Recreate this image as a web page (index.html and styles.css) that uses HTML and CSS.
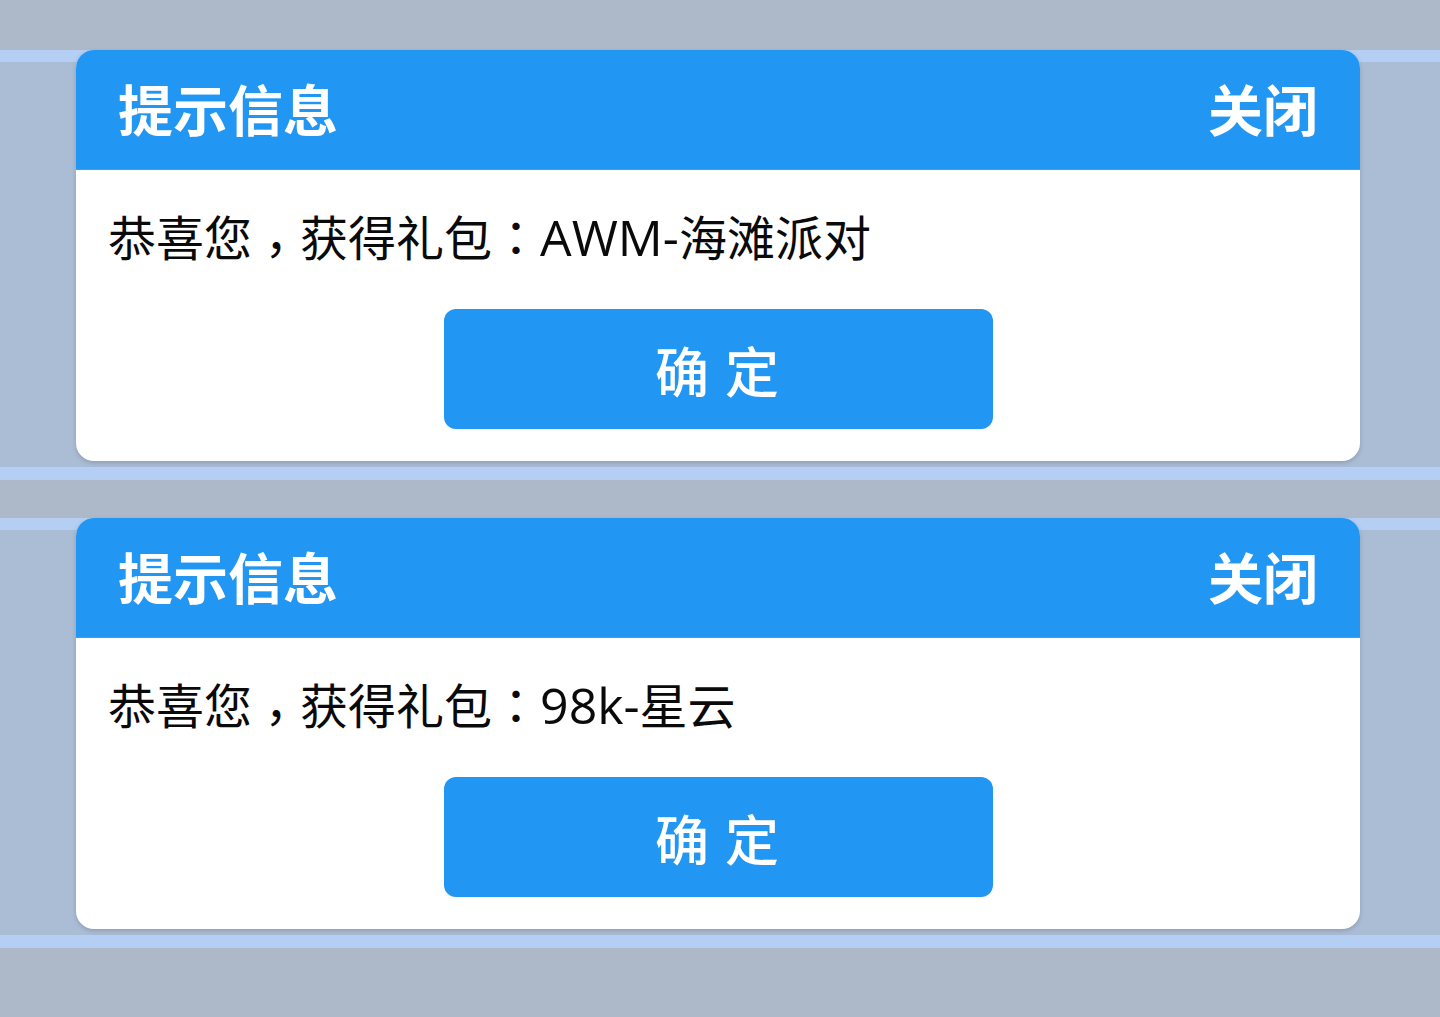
FILE: index.html
```html
<!DOCTYPE html>
<html lang="zh-CN">
<head>
<meta charset="utf-8">
<title>提示信息</title>
<link rel="stylesheet" href="styles.css">
</head>
<body>
<div class="page">
  <section class="overlay">
    <div class="dialog">
      <div class="dialog-head">
        <span class="dialog-title">提示信息</span>
        <span class="dialog-close">关闭</span>
      </div>
      <div class="dialog-body">
        <p class="dialog-msg">恭喜您<span class="punct comma" lang="zh-TW">，</span>获得礼包<span class="punct" lang="zh-TW">：</span><span class="code">AWM-</span>海滩派对</p>
        <button class="dialog-btn">确 定</button>
      </div>
    </div>
  </section>
  <section class="overlay">
    <div class="dialog">
      <div class="dialog-head">
        <span class="dialog-title">提示信息</span>
        <span class="dialog-close">关闭</span>
      </div>
      <div class="dialog-body">
        <p class="dialog-msg">恭喜您<span class="punct comma" lang="zh-TW">，</span>获得礼包<span class="punct" lang="zh-TW">：</span><span class="code">98k-</span>星云</p>
        <button class="dialog-btn">确 定</button>
      </div>
    </div>
  </section>
</div>
</body>
</html>
```

FILE: styles.css
```css
html, body {
  margin: 0;
  padding: 0;
}

body {
  background: #adb8c9;
  font-family: "Noto Sans CJK SC", "Noto Sans", sans-serif;
  height: 1017px;
  overflow: hidden;
}

.page {
  display: flex;
  flex-direction: column;
  gap: 38px;
  padding-top: 50px;
}

.overlay {
  height: 430px;
  background: linear-gradient(to bottom,
    #b4cff3 0, #b4cff3 12px,
    #abbdd5 12px, #abbdd5 calc(100% - 13px),
    #b4cff3 calc(100% - 13px), #b4cff3 100%);
}

.dialog {
  margin: 0 80px 0 76px;
  background: #ffffff;
  border-radius: 18px;
  overflow: hidden;
  box-shadow: 0 2px 4px rgba(90, 100, 120, 0.35);
}

.dialog-head {
  height: 120px;
  background: #2196f3;
  color: #ffffff;
  display: flex;
  align-items: center;
  justify-content: space-between;
  padding: 0 42px;
  font-size: 55px;
  font-weight: 700;
  border-bottom: 1px solid #3aa2f4;
  box-sizing: border-box;
}

.dialog-title,
.dialog-close {
  line-height: 1;
  position: relative;
  top: -2px;
}

.dialog-body {
  padding: 31px 32px 32px;
  display: flex;
  flex-direction: column;
}

.dialog-msg {
  margin: 0;
  height: 68px;
  font-family: "Noto Sans CJK SC", sans-serif;
  font-size: 48px;
  line-height: 68px;
  color: #0a0a0a;
  white-space: nowrap;
}

.punct {
  font-family: "Noto Sans CJK TC", sans-serif;
}

.comma {
  position: relative;
  top: 11px;
}

.code {
  font-family: "Open Sans", "Noto Sans", sans-serif;
  font-size: 50px;
  line-height: 1;
}

.dialog-btn {
  align-self: center;
  margin: 40px 0 0 0;
  width: 549px;
  height: 120px;
  border: none;
  border-radius: 12px;
  background: #2196f3;
  color: #ffffff;
  font-family: "Noto Sans CJK SC", "Noto Sans", sans-serif;
  font-size: 54px;
  font-weight: 500;
  letter-spacing: 2px;
  padding: 0;
  cursor: pointer;
}
```
